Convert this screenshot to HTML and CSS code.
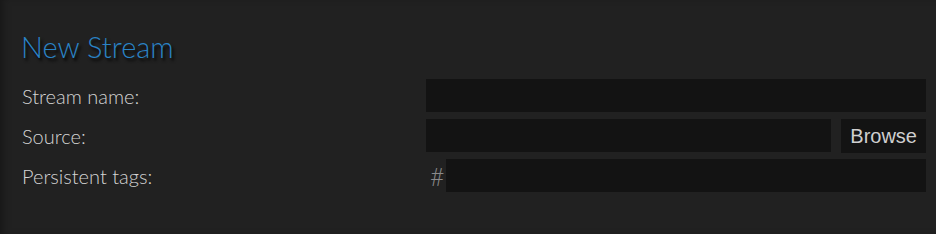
FILE: index.html
```html
<!DOCTYPE html>
<html>
<head>
    <title>New Stream</title>
    <link rel="stylesheet" href="styles.css">
</head>
<body>
    <div class="panel">
        <h1 class="title">New Stream</h1>

        <form class="stream-form">
            <label class="field-label" for="streamName">Stream name:</label>
            <div class="field">
                <input class="text-input" id="streamName" type="text">
            </div>

            <label class="field-label" for="source">Source:</label>
            <div class="field">
                <input class="text-input" id="source" type="text">
                <button class="browse-btn" type="button">Browse</button>
            </div>

            <label class="field-label" for="tags">Persistent tags:</label>
            <div class="field">
                <span class="hash">#</span>
                <input class="text-input" id="tags" type="text">
            </div>
        </form>
    </div>
</body>
</html>
```

FILE: styles.css
```css
body {
    margin: 0;
    height: 100vh;
    background: #212121;
    box-shadow: inset 6px 0 8px -4px rgba(0,0,0,0.35);
    font-family: Lato, 'Liberation Sans', sans-serif;
    overflow: hidden;
}

/* Panel */
.panel {
    padding: 27px 10px 0 22px;
}

.title {
    margin: 0 0 12px -1px;
    font-size: 29px;
    font-weight: 300;
    line-height: 40px;
    color: #2a83c6;
    text-shadow: 2px 3px 3px rgba(0,0,0,0.9);
}

/* Form grid */
.stream-form {
    display: grid;
    grid-template-columns: 404px 1fr;
    row-gap: 7px;
    align-items: center;
}

.field-label {
    font-size: 20px;
    font-weight: 300;
    color: #d4d4d4;
}

.field {
    display: flex;
    align-items: center;
    height: 33px;
}

.text-input {
    flex: 1;
    height: 33px;
    margin: 0;
    padding: 0 6px;
    border: none;
    background: #131313;
    color: #ddd;
    box-sizing: border-box;
}

.browse-btn {
    height: 34px;
    margin-left: 10px;
    padding: 0 9px;
    border: none;
    background: #131313;
    color: #cfcfcf;
    font-family: 'Liberation Sans', Arial, sans-serif;
    font-size: 20px;
    align-self: flex-start;
}

.hash {
    width: 20px;
    padding-left: 4px;
    box-sizing: border-box;
    color: #8a8a8a;
    font-size: 25px;
    font-weight: 300;
}
```
